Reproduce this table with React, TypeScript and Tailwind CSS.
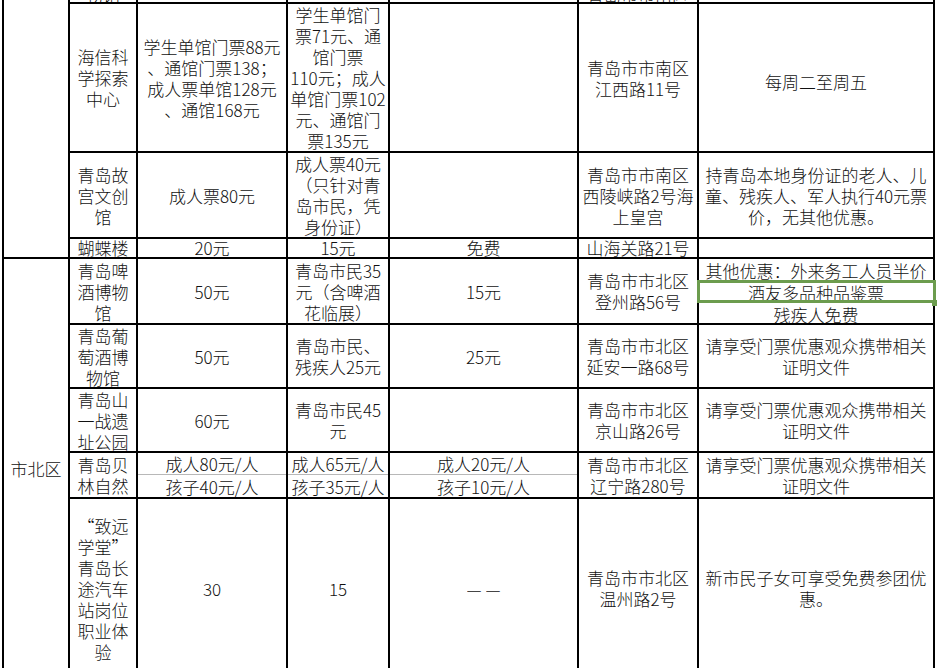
import React from "react";

type CellProps = { lines?: string[]; className?: string };

function Cell({ lines = [], className = "" }: CellProps) {
  return (
    <div className={"bg-white flex items-center justify-center text-center overflow-hidden " + className}>
      <div>
        {lines.map((l, i) => (
          <div key={i} className="whitespace-nowrap">
            {l}
          </div>
        ))}
      </div>
    </div>
  );
}

function Split({ top, bottom }: { top: string; bottom: string }) {
  return (
    <div className="bg-white flex flex-col overflow-hidden">
      <div className="h-[22px] shrink-0 flex items-center justify-center border-b border-[#b8b8b8] leading-[22px] whitespace-nowrap">
        {top}
      </div>
      <div className="flex-1 flex items-center justify-center leading-[21px] whitespace-nowrap">{bottom}</div>
    </div>
  );
}

export default function App() {
  return (
    <div className="w-[937px] h-[668px] overflow-hidden bg-white">
      <div className="ml-[2px] w-[933px] grid grid-cols-[64px_66px_148px_100px_187px_118px_234px] grid-rows-[2px_147px_84px_18px_64px_62px_62px_44px_178px] gap-[2px] bg-black px-[2px] pb-[2px] text-[17px] leading-[21px] font-light text-[#111] font-['Noto_Sans_CJK_SC',sans-serif]">
        {/* partial top row */}
        <div className="bg-white row-span-4" />
        <div className="bg-white flex items-end justify-center overflow-hidden">
          <div className="mb-[-3px] whitespace-nowrap">物馆</div>
        </div>
        <div className="bg-white" />
        <div className="bg-white" />
        <div className="bg-white" />
        <div className="bg-white flex items-end justify-center overflow-hidden">
          <div className="mb-[-3px] whitespace-nowrap">青岛市市南区</div>
        </div>
        <div className="bg-white" />

        {/* 海信科学探索中心 */}
        <Cell lines={["海信科", "学探索", "中心"]} />
        <Cell lines={["学生单馆门票88元", "、通馆门票138；", "成人票单馆128元", "、通馆168元"]} />
        <Cell lines={["学生单馆门", "票71元、通", "馆门票", "110元；成人", "单馆门票102", "元、通馆门", "票135元"]} />
        <Cell />
        <Cell lines={["青岛市市南区", "江西路11号"]} />
        <Cell lines={["每周二至周五"]} className="pt-[8px]" />

        {/* 青岛故宫文创馆 */}
        <Cell lines={["青岛故", "宫文创", "馆"]} />
        <Cell lines={["成人票80元"]} />
        <Cell lines={["成人票40元", "（只针对青", "岛市民，凭", "身份证）"]} />
        <Cell />
        <Cell lines={["青岛市市南区", "西陵峡路2号海", "上皇宫"]} />
        <Cell lines={["持青岛本地身份证的老人、儿", "童、残疾人、军人执行40元票", "价，无其他优惠。"]} />

        {/* 蝴蝶楼 */}
        <Cell lines={["蝴蝶楼"]} className="leading-[18px]" />
        <Cell lines={["20元"]} className="leading-[18px]" />
        <Cell lines={["15元"]} className="leading-[18px]" />
        <Cell lines={["免费"]} className="leading-[18px]" />
        <Cell lines={["山海关路21号"]} className="leading-[18px]" />
        <Cell />

        {/* 市北区 */}
        <Cell lines={["市北区"]} className="row-span-5" />
        <Cell lines={["青岛啤", "酒博物", "馆"]} />
        <Cell lines={["50元"]} />
        <Cell lines={["青岛市民35", "元（含啤酒", "花临展）"]} />
        <Cell lines={["15元"]} />
        <Cell lines={["青岛市市北区", "登州路56号"]} />
        <div className="bg-white flex flex-col relative">
          <div className="h-[22px] shrink-0 flex items-center justify-center whitespace-nowrap">其他优惠：外来务工人员半价</div>
          <div className="h-[23px] shrink-0 flex items-center justify-center whitespace-nowrap">酒友多品种品鉴票</div>
          <div className="flex-1 overflow-hidden text-center leading-[19px] pt-[1px] whitespace-nowrap">残疾人免费</div>
          <div className="absolute left-[-2px] right-[-3px] top-[21px] h-[23px] border-[3px] border-[#6c9c4e]" />
          <div className="absolute right-[-4px] top-[41px] w-[5px] h-[6px] bg-[#6c9c4e]" />
        </div>

        {/* 青岛葡萄酒博物馆 */}
        <Cell lines={["青岛葡", "萄酒博", "物馆"]} />
        <Cell lines={["50元"]} />
        <Cell lines={["青岛市民、", "残疾人25元"]} />
        <Cell lines={["25元"]} />
        <Cell lines={["青岛市市北区", "延安一路68号"]} />
        <Cell lines={["请享受门票优惠观众携带相关", "证明文件"]} />

        {/* 青岛山一战遗址公园 */}
        <Cell lines={["青岛山", "一战遗", "址公园"]} />
        <Cell lines={["60元"]} />
        <Cell lines={["青岛市民45", "元"]} />
        <Cell />
        <Cell lines={["青岛市市北区", "京山路26号"]} />
        <Cell lines={["请享受门票优惠观众携带相关", "证明文件"]} />

        {/* 青岛贝林自然 */}
        <Cell lines={["青岛贝", "林自然"]} />
        <Split top="成人80元/人" bottom="孩子40元/人" />
        <Split top="成人65元/人" bottom="孩子35元/人" />
        <Split top="成人20元/人" bottom="孩子10元/人" />
        <Cell lines={["青岛市市北区", "辽宁路280号"]} />
        <Cell lines={["请享受门票优惠观众携带相关", "证明文件"]} />

        {/* 致远学堂 */}
        <Cell lines={["“致远", "学堂”", "青岛长", "途汽车", "站岗位", "职业体", "验"]} />
        <Cell lines={["30"]} />
        <Cell lines={["15"]} />
        <div className="bg-white flex items-center justify-center gap-[4px]">
          <span className="inline-block w-[15px] overflow-hidden">—</span>
          <span className="inline-block w-[15px] overflow-hidden">—</span>
        </div>
        <Cell lines={["青岛市市北区", "温州路2号"]} />
        <Cell lines={["新市民子女可享受免费参团优", "惠。"]} />
      </div>
    </div>
  );
}
